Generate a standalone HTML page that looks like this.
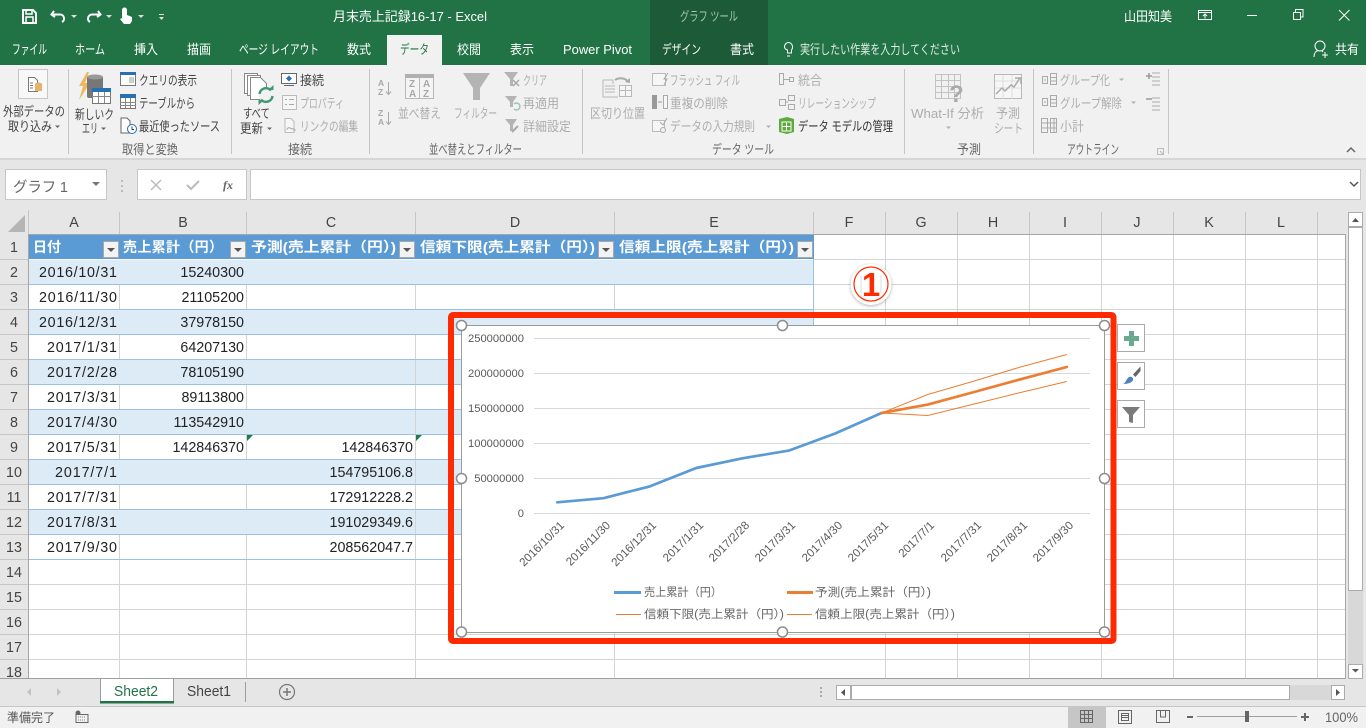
<!DOCTYPE html>
<html lang="ja"><head><meta charset="utf-8"><title>月末売上記録16-17 - Excel</title>
<style>
html,body{margin:0;padding:0;width:1366px;height:728px;overflow:hidden;background:#e6e6e6}
svg{display:block;font-family:"Liberation Sans","Noto Sans CJK JP",sans-serif}
.t{font-size:13px;fill:#fff}
.r{font-size:13px;fill:#444}
.d{font-size:13px;fill:#adadad}
.g{font-size:13px;fill:#666}
.c{font-size:14.3px;fill:#222}
.h{font-size:14.3px;fill:#444;text-anchor:middle}
.b{font-size:14px;font-weight:700;fill:#fff}
.y{font-size:11.2px;fill:#595959;text-anchor:end}
.x{font-size:11.6px;fill:#595959;text-anchor:end}
.l{font-size:11.5px;fill:#666}
</style></head><body>
<svg width="1366" height="728" viewBox="0 0 1366 728" xmlns="http://www.w3.org/2000/svg">
<rect width="1366" height="728" fill="#e6e6e6"/>
<!-- title bar -->
<rect width="1366" height="65" fill="#217346"/>
<rect x="650" width="118" height="65" fill="#1c5a38"/>
<rect x="387" y="35" width="55" height="30" fill="#f1f1f1"/>
<!-- QAT -->
<g fill="none" stroke="#fff" stroke-width="2">
<path d="M23 10h10l3 3v10H23z"/><path d="M26 10v4h6v-4M26 23v-6h7v6" stroke-width="1.500"/>
<path d="M54 11l-2.500 3.500 3.500 2.500M52 14.500h8a4 4 0 0 1 2 7.500"/>
<path d="M98 11l2.500 3.500-3.500 2.500M100 14.500h-8a4 4 0 0 0-4 4 4 4 0 0 0 2 3.500"/>
</g>
<path d="M122 10a2.500 2.500 0 0 1 5 0v5l5 2v4l-2 3h-6l-4-5 2-1z" fill="#fff"/>
<path d="M71 15h6l-3 3zM106 15h6l-3 3zM138 15h6l-3 3zM159 17h5l-2.500 3z" fill="#ddd"/><rect x="159" y="14" width="5" height="1" fill="#ddd"/>
<text class="t" x="333" y="21" textLength="154" lengthAdjust="spacingAndGlyphs">月末売上記録16-17  -  Excel</text>
<text class="t" x="680" y="21" textLength="58" lengthAdjust="spacingAndGlyphs" style="fill:#a5c6b2">グラフ ツール</text>
<text class="t" x="1124" y="21" textLength="48" lengthAdjust="spacingAndGlyphs">山田知美</text>
<g fill="none" stroke="#fff" stroke-width="1">
<rect x="1198.500" y="10.500" width="13" height="9"/><path d="M1198 12.500h14M1205 18.500v-4M1203 16l2-2 2 2"/>
<path d="M1247 15.500h10"/>
<path d="M1293.500 12.500h7v7h-7zM1295.500 12v-2.500h7.500v7.500h-2.500"/>
<path d="M1339 10l10.500 10.500M1349.500 10L1339 20.500"/>
</g>
<!-- tabs -->
<g class="t">
<text class="t" x="12" y="54" textLength="35" lengthAdjust="spacingAndGlyphs">ファイル</text>
<text class="t" x="75" y="54" textLength="30" lengthAdjust="spacingAndGlyphs">ホーム</text>
<text class="t" x="134" y="54" textLength="24" lengthAdjust="spacingAndGlyphs">挿入</text>
<text class="t" x="187" y="54" textLength="24" lengthAdjust="spacingAndGlyphs">描画</text>
<text class="t" x="239" y="54" textLength="80" lengthAdjust="spacingAndGlyphs">ページ レイアウト</text>
<text class="t" x="347" y="54" textLength="24" lengthAdjust="spacingAndGlyphs">数式</text>
<text class="t" x="400" y="54" textLength="29" lengthAdjust="spacingAndGlyphs" style="fill:#217346">データ</text>
<text class="t" x="457" y="54" textLength="24" lengthAdjust="spacingAndGlyphs">校閲</text>
<text class="t" x="510" y="54" textLength="24" lengthAdjust="spacingAndGlyphs">表示</text>
<text class="t" x="563" y="54" textLength="69" lengthAdjust="spacingAndGlyphs">Power Pivot</text>
<text class="t" x="662" y="54" textLength="39" lengthAdjust="spacingAndGlyphs">デザイン</text>
<text class="t" x="730" y="54" textLength="24" lengthAdjust="spacingAndGlyphs">書式</text>
<text class="t" x="800" y="54" textLength="160" lengthAdjust="spacingAndGlyphs" style="fill:#dfeae3">実行したい作業を入力してください</text>
<text class="t" x="1335" y="54" textLength="24" lengthAdjust="spacingAndGlyphs">共有</text>
</g>
<g fill="none" stroke="#fff" stroke-width="1">
<path d="M784.500 47a4 4.500 0 1 1 7 3v3h-4v-3a4 4 0 0 1-3-3zM787 56h3"/>
<circle cx="1320" cy="46" r="5"/><path d="M1314 57c0-4 2-6 4-6.500M1322 51l1 1M1322 55h6M1325 52v6"/>
</g>
<!-- ribbon -->
<rect y="65" width="1366" height="93" fill="#f1f1f1"/>
<rect y="158" width="1366" height="2" fill="#d6d6d6"/>
<g fill="#c6c6c6"><rect x="68" y="69" width="1" height="85"/><rect x="231" y="69" width="1" height="85"/><rect x="369" y="69" width="1" height="85"/><rect x="582" y="69" width="1" height="85"/><rect x="904" y="69" width="1" height="85"/><rect x="1033" y="69" width="1" height="85"/><rect x="1168" y="69" width="1" height="85"/></g>
<!-- external data -->
<rect x="18.500" y="69.500" width="29" height="29" fill="#f8f8f8" stroke="#c6c6c6"/>
<path d="M28.500 77.500h6l3 3v11h-9z" fill="#fff" stroke="#777"/><path d="M30 83h3M30 85.500h3M30 88h3" stroke="#777"/>
<ellipse cx="38.500" cy="84" rx="3.500" ry="1.500" fill="#e3b36a"/><rect x="35" y="84" width="7" height="7" fill="#e3b36a"/>
<text class="r" x="3" y="116" textLength="62" lengthAdjust="spacingAndGlyphs">外部データの</text>
<text class="r" x="8" y="131" textLength="44" lengthAdjust="spacingAndGlyphs">取り込み</text>
<path d="M55 125.500h5l-2.500 2.500z" fill="#666"/>
<!-- new query -->
<path d="M87 72l-8 14h4l-4 14 11-17h-5l4-11z" fill="#edb95e"/>
<rect x="87" y="76" width="16" height="22" rx="2" fill="#777"/><ellipse cx="95" cy="77" rx="8" ry="2.500" fill="#999"/>
<rect x="92.500" y="88.500" width="18" height="15" fill="#fff" stroke="#777"/><rect x="92" y="88" width="19" height="4" fill="#2a6fb1"/><path d="M92 96.500h19M98.500 92v11M104.500 92v11" stroke="#888"/>
<text class="r" x="75" y="119" textLength="39" lengthAdjust="spacingAndGlyphs">新しいク</text>
<text class="r" x="82" y="133" textLength="16" lengthAdjust="spacingAndGlyphs">エリ</text>
<path d="M101 127.500h5l-2.500 2.500z" fill="#666"/>
<rect x="120.500" y="72.500" width="15" height="13" fill="#fff" stroke="#777"/><rect x="120" y="72" width="16" height="3" fill="#2a6fb1"/><path d="M129 78h5M129 80h5M129 82h5" stroke="#999" fill="none"/>
<text class="r" x="139" y="85" textLength="58" lengthAdjust="spacingAndGlyphs">クエリの表示</text>
<rect x="120.500" y="94.500" width="15" height="14" fill="#fff" stroke="#777"/><rect x="120" y="94" width="16" height="4" fill="#2a6fb1"/><path d="M120 102.500h16M120 105.500h16M125.500 98v10M130.500 98v10" stroke="#888"/>
<text class="r" x="139" y="108" textLength="56" lengthAdjust="spacingAndGlyphs">テーブルから</text>
<path d="M121 118h6l3 3v12h-9z" fill="#fff" stroke="#666"/><circle cx="132" cy="129" r="4.500" fill="#fff" stroke="#2a6fb1"/><path d="M132 126.500v3h2" stroke="#444" fill="none"/>
<text class="r" x="139" y="131" textLength="81" lengthAdjust="spacingAndGlyphs">最近使ったソース</text>
<text class="g" x="122" y="154" textLength="56" lengthAdjust="spacingAndGlyphs">取得と変換</text>
<!-- refresh all -->
<g fill="#fff" stroke="#888"><rect x="244.500" y="73.500" width="13" height="20"/><rect x="247.500" y="75.500" width="13" height="20"/><path d="M250.500 77.500h10l6 6v16h-16z"/></g>
<circle cx="266" cy="95" r="7.500" fill="#f1f1f1"/><path d="M259.500 94a6.500 6.500 0 0 1 11.500-3.500M272.500 96a6.500 6.500 0 0 1-11.500 3.500" fill="none" stroke="#3f9a74" stroke-width="2.500"/><path d="M268 90h5.500v-5zM264 100h-5.500v5z" fill="#3f9a74"/>
<text class="r" x="243" y="118" textLength="27" lengthAdjust="spacingAndGlyphs">すべて</text>
<text class="r" x="240" y="133" textLength="23" lengthAdjust="spacingAndGlyphs">更新</text>
<path d="M267 127.500h5l-2.500 2.500z" fill="#666"/>
<rect x="281.500" y="73.500" width="15" height="10" fill="#fff" stroke="#666"/><path d="M289 75.500l3 3-3 3-3-3z" fill="#2a6fb1"/><path d="M284 85.500h10" stroke="#666"/>
<text class="r" x="300" y="85" textLength="24" lengthAdjust="spacingAndGlyphs">接続</text>
<rect x="282.500" y="95.500" width="14" height="14" fill="#f6f6f6" stroke="#bbb"/><path d="M285 99.500h2M289 99.500h5M285 104.500h2M289 104.500h5" stroke="#aaa"/>
<text class="d" x="300" y="108" textLength="44" lengthAdjust="spacingAndGlyphs">プロパティ</text>
<path d="M285 118.500h6l3 3v11h-9z" fill="#f6f6f6" stroke="#bbb"/><path d="M287 130a2 2 0 0 1 3-2l2 1a2 2 0 0 1 3 2" fill="none" stroke="#aaa"/>
<text class="d" x="300" y="131" textLength="58" lengthAdjust="spacingAndGlyphs">リンクの編集</text>
<text class="g" x="288" y="154" textLength="24" lengthAdjust="spacingAndGlyphs">接続</text>
<!-- sort -->
<g font-size="8.500" fill="#a8a8a8" font-weight="700"><text x="378" y="86">A</text><text x="378" y="95">Z</text><text x="378" y="116">Z</text><text x="378" y="125">A</text></g>
<path d="M388.500 82v12M386 91.500l2.500 3 2.500-3M388.500 112v12M386 121.500l2.500 3 2.500-3" fill="none" stroke="#a8a8a8"/>
<rect x="405.500" y="74.500" width="28" height="24" fill="#f4f4f4" stroke="#b8b8b8"/><rect x="405" y="74" width="29" height="4" fill="#b0b0b0"/><path d="M419.500 78v20" stroke="#b8b8b8"/>
<g font-size="10" fill="#a8a8a8" font-weight="700"><text x="409" y="87">Z</text><text x="423" y="87">A</text><text x="409" y="97">A</text><text x="423" y="97">Z</text></g>
<text class="d" x="398" y="118" textLength="43" lengthAdjust="spacingAndGlyphs">並べ替え</text>
<path d="M463 73h27l-10 15v12h-7V88z" fill="#b4b4b4"/>
<text class="d" x="454" y="118" textLength="43" lengthAdjust="spacingAndGlyphs">フィルター</text>
<path d="M504 72h14l-5 7v7h-3v-7z" fill="#b4b4b4"/><path d="M513 80l6 6M519 80l-6 6" stroke="#a8a8a8" stroke-width="1.500"/>
<text class="d" x="523" y="85" textLength="24" lengthAdjust="spacingAndGlyphs">クリア</text>
<path d="M505 96h12l-4 6v5h-3v-5z" fill="#b4b4b4"/><path d="M514 104a3.500 3.500 0 1 1 0 5" fill="none" stroke="#9cc5b2" stroke-width="1.500"/>
<text class="d" x="523" y="108" textLength="36" lengthAdjust="spacingAndGlyphs">再適用</text>
<path d="M505 119h12l-4 6v6h-3v-6z" fill="#b4b4b4"/><path d="M512 132l6-6" stroke="#a8a8a8" stroke-width="2"/>
<text class="d" x="523" y="131" textLength="48" lengthAdjust="spacingAndGlyphs">詳細設定</text>
<text class="g" x="429" y="154" textLength="93" lengthAdjust="spacingAndGlyphs">並べ替えとフィルター</text>
<!-- data tools -->
<path d="M603 80h10v4M603 80v17h15" fill="none" stroke="#b8b8b8"/><path d="M605 86h10M605 89h10M605 92h10" stroke="#b8b8b8"/>
<path d="M615 80a8 6 0 0 1 13 2" fill="none" stroke="#aaa" stroke-width="2"/><path d="M625 82l5 1 0-5z" fill="#aaa"/>
<rect x="619.500" y="85.500" width="12" height="11" fill="#f6f6f6" stroke="#b8b8b8"/><path d="M619 90.500h13M625.500 86v10" stroke="#b8b8b8"/>
<text class="d" x="590" y="118" textLength="55" lengthAdjust="spacingAndGlyphs">区切り位置</text>
<rect x="652.500" y="73.500" width="13" height="12" fill="#f6f6f6" stroke="#bbb"/><path d="M668 73l-4 6h3l-3 6" fill="none" stroke="#aaa"/>
<text class="d" x="670" y="85" textLength="70" lengthAdjust="spacingAndGlyphs">フラッシュ フィル</text>
<rect x="652" y="95" width="5" height="14" fill="#999"/><rect x="663.500" y="95.500" width="4" height="13" fill="#f6f6f6" stroke="#aaa"/><path d="M658 102h4" stroke="#999"/>
<text class="d" x="670" y="108" textLength="58" lengthAdjust="spacingAndGlyphs">重複の削除</text>
<rect x="652.500" y="120.500" width="12" height="11" fill="#f6f6f6" stroke="#bbb"/><path d="M660 122l3 3 4-7" fill="none" stroke="#aaa"/><circle cx="663" cy="130" r="2.500" fill="#f1f1f1" stroke="#aaa"/>
<text class="d" x="670" y="131" textLength="85" lengthAdjust="spacingAndGlyphs">データの入力規則</text>
<path d="M766 125.500h5l-2.500 2.500z" fill="#b0b0b0"/>
<path d="M779.500 73.500h4v11h-4zM789.500 77.500h4v4h-4zM784 79.500h5" fill="none" stroke="#aaa"/>
<text class="d" x="798" y="85" textLength="24" lengthAdjust="spacingAndGlyphs">統合</text>
<path d="M779.500 99.500h6v6h-6zM788.500 95.500h6v5h-6zM788.500 104.500h6v5h-6zM785 102h3" fill="none" stroke="#aaa"/>
<text class="d" x="798" y="108" textLength="78" lengthAdjust="spacingAndGlyphs">リレーションシップ</text>
<path d="M779 119l8-2 7 2v13l-7 2-8-2z" fill="#5eaa3c"/><path d="M782 122h9v9h-9zM786.500 122v9M782 126.500h9" stroke="#fff" fill="none"/>
<text class="r" x="798" y="131" textLength="95" lengthAdjust="spacingAndGlyphs" style="fill:#333">データ モデルの管理</text>
<text class="g" x="712" y="154" textLength="62" lengthAdjust="spacingAndGlyphs">データ ツール</text>
<!-- forecast -->
<g fill="none" stroke="#c2c2c2"><rect x="935.500" y="74.500" width="25" height="24"/><path d="M935 80.500h25M935 86.500h25M935 92.500h25M941.500 74v25M948.500 74v25M954.500 74v25"/></g>
<text x="949" y="102" font-size="24" font-weight="700" fill="#aaa" font-family="Liberation Sans">?</text>
<text class="d" x="911" y="118" textLength="73" lengthAdjust="spacingAndGlyphs">What-If 分析</text>
<path d="M946 126.500h5l-2.500 2.500z" fill="#b0b0b0"/>
<g fill="#f6f6f6" stroke="#b8b8b8"><rect x="994.500" y="74.500" width="27" height="24"/></g>
<path d="M995 81h26M995 88h26M1003 75v24M1012 75v24" stroke="#ddd"/>
<path d="M996 94l6-6 3 3 6-6 3 2 6-9M1015 78h6v6" fill="none" stroke="#aaa" stroke-width="1.500"/>
<text class="d" x="996" y="118" textLength="24" lengthAdjust="spacingAndGlyphs">予測</text>
<text class="d" x="994" y="133" textLength="29" lengthAdjust="spacingAndGlyphs">シート</text>
<text class="g" x="957" y="154" textLength="24" lengthAdjust="spacingAndGlyphs">予測</text>
<!-- outline -->
<g fill="none" stroke="#aaa">
<path d="M1042.500 76.500h5v7h-5zM1050.500 73.500h6v11h-6zM1050 77.500h7M1050 81h7M1044 80h2"/>
<path d="M1042.500 98.500h5v7h-5zM1050.500 95.500h6v11h-6zM1050 99.500h7M1050 103h7M1044 102h2"/>
<path d="M1041.500 118.500h6v14h-6zM1050.500 118.500h6v14h-6zM1041 123h16M1041 128h16M1054 118v15"/>
<path d="M1152 73h8M1152 77h8M1152 81h8M1152 85h8M1152 98h8M1152 102h8M1152 106h8M1152 110h8"/>
</g>
<path d="M1146 76h6M1149 73v6M1146 99h6" stroke="#999" stroke-width="1.500"/>
<text class="d" x="1060" y="85" textLength="50" lengthAdjust="spacingAndGlyphs">グループ化</text>
<path d="M1119 78.500h5l-2.500 2.500z" fill="#b0b0b0"/>
<text class="d" x="1060" y="108" textLength="62" lengthAdjust="spacingAndGlyphs">グループ解除</text>
<path d="M1131 101.500h5l-2.500 2.500z" fill="#b0b0b0"/>
<text class="d" x="1060" y="131" textLength="24" lengthAdjust="spacingAndGlyphs">小計</text>
<text class="g" x="1067" y="154" textLength="52" lengthAdjust="spacingAndGlyphs">アウトライン</text>
<path d="M1157.500 148.500h6v6h-6zM1160 151l3 3" fill="none" stroke="#bbb"/>
<path d="M1347 152l4-4 4 4" fill="none" stroke="#666" stroke-width="1.500"/>
<!-- formula bar -->
<rect x="5.500" y="169.500" width="101" height="30" fill="#fff" stroke="#c6c6c6"/>
<text x="13" y="192" font-size="14.500" fill="#666" textLength="55">グラフ 1</text>
<path d="M92 182h8l-4 4z" fill="#777"/>
<g fill="#bbb"><rect x="121" y="180" width="2" height="2"/><rect x="121" y="185" width="2" height="2"/><rect x="121" y="190" width="2" height="2"/></g>
<rect x="137.500" y="169.500" width="109" height="30" fill="#fff" stroke="#c6c6c6"/>
<path d="M151 180l10 10M161 180l-10 10" stroke="#bbb" stroke-width="1.500"/>
<path d="M187 185l4 4 8-8" fill="none" stroke="#bbb" stroke-width="2"/>
<text x="223" y="189" font-size="12" font-style="italic" font-weight="700" fill="#666" font-family="Liberation Serif">fx</text>
<rect x="250.500" y="169.500" width="1110" height="30" fill="#fff" stroke="#c6c6c6"/>
<path d="M1350 182l4 4 4-4" fill="none" stroke="#555" stroke-width="1.500"/>
<!-- sheet bg -->
<rect x="29" y="235" width="1317" height="443" fill="#fff"/>
<rect y="210" width="1346" height="25" fill="#e6e6e6"/>
<rect y="235" width="29" height="443" fill="#e6e6e6"/>
<path d="M8 232L25 215v17z" fill="#b5b5b5"/>
<!-- table bands -->
<g fill="#ddebf7"><rect x="29" y="260" width="785" height="24"/><rect x="29" y="310" width="785" height="24"/><rect x="29" y="360" width="785" height="24"/><rect x="29" y="410" width="785" height="24"/><rect x="29" y="460" width="785" height="24"/><rect x="29" y="510" width="785" height="24"/></g>
<!-- grid -->
<g stroke="#d4d4d4">
<path d="M119.500 284v25M246.500 284v25M415.500 284v25M614.500 284v25M119.500 334v25M246.500 334v25M119.500 384v25M246.500 384v25M119.500 434v25M246.500 434v25M119.500 484v25M246.500 484v25M119.500 534v25M246.500 534v25M119.500 559v119M246.500 559v119M415.500 334v344M614.500 334v344"/>
<path d="M885.500 235v443M957.500 235v443M1029.500 235v443M1101.500 235v443M1173.500 235v443M1245.500 235v443M1317.500 235v443"/>
<path d="M814 259.500h532M814 284.500h532M814 309.500h532M814 334.500h532M814 359.500h532M814 384.500h532M814 409.500h532M814 434.500h532M814 459.500h532M814 484.500h532M814 509.500h532M814 534.500h532M814 559.500h532M29 584.500h1317M29 609.500h1317M29 634.500h1317M29 659.500h1317"/>
</g>
<g stroke="#9bc2e6"><path d="M29 284.500h785M29 309.500h785M29 334.500h785M29 359.500h785M29 384.500h785M29 409.500h785M29 434.500h785M29 459.500h785M29 484.500h785M29 509.500h785M29 534.500h785M29 559.500h785M813.500 235v325"/></g>
<!-- headers -->
<g stroke="#c6c6c6"><path d="M119.500 212v22M246.500 212v22M415.500 212v22M614.500 212v22M813.500 212v22M885.500 212v22M957.500 212v22M1029.500 212v22M1101.500 212v22M1173.500 212v22M1245.500 212v22M1317.500 212v22M28.500 210v24"/>
<path d="M0 259.500h28M0 284.500h28M0 309.500h28M0 334.500h28M0 359.500h28M0 384.500h28M0 409.500h28M0 434.500h28M0 459.500h28M0 484.500h28M0 509.500h28M0 534.500h28M0 559.500h28M0 584.500h28M0 609.500h28M0 634.500h28M0 659.500h28"/></g>
<path d="M28.500 234v444M28 234.500h1318" stroke="#a6a6a6"/>
<text class="h" x="74" y="227">A</text><text class="h" x="183" y="227">B</text><text class="h" x="331" y="227">C</text><text class="h" x="515" y="227">D</text><text class="h" x="714" y="227">E</text><text class="h" x="849" y="227">F</text><text class="h" x="921" y="227">G</text><text class="h" x="993" y="227">H</text><text class="h" x="1065" y="227">I</text><text class="h" x="1137" y="227">J</text><text class="h" x="1209" y="227">K</text><text class="h" x="1281" y="227">L</text>
<text class="h" x="14" y="252">1</text><text class="h" x="14" y="277">2</text><text class="h" x="14" y="302">3</text><text class="h" x="14" y="327">4</text><text class="h" x="14" y="352">5</text><text class="h" x="14" y="377">6</text><text class="h" x="14" y="402">7</text><text class="h" x="14" y="427">8</text><text class="h" x="14" y="452">9</text><text class="h" x="14" y="477">10</text><text class="h" x="14" y="502">11</text><text class="h" x="14" y="527">12</text><text class="h" x="14" y="552">13</text><text class="h" x="14" y="577">14</text><text class="h" x="14" y="602">15</text><text class="h" x="14" y="627">16</text><text class="h" x="14" y="652">17</text><text class="h" x="14" y="677">18</text>
<!-- table header -->
<rect x="29" y="235" width="785" height="24" fill="#5b9bd5"/>
<text class="b" x="33" y="252" textLength="28">日付</text>
<text class="b" x="123" y="252" textLength="100">売上累計（円）</text>
<text class="b" x="251" y="252" textLength="145" lengthAdjust="spacingAndGlyphs">予測(売上累計（円）)</text>
<text class="b" x="420" y="252" textLength="175" lengthAdjust="spacingAndGlyphs">信頼下限(売上累計（円）)</text>
<text class="b" x="619" y="252" textLength="175" lengthAdjust="spacingAndGlyphs">信頼上限(売上累計（円）)</text>
<g fill="#f3f3f3" stroke="#a8a8a8"><rect x="103.500" y="241.500" width="15" height="16"/><rect x="230.500" y="241.500" width="15" height="16"/><rect x="399.500" y="241.500" width="15" height="16"/><rect x="598.500" y="241.500" width="15" height="16"/><rect x="797.500" y="241.500" width="15" height="16"/></g>
<g fill="#555"><path d="M107 248h8l-4 4zM234 248h8l-4 4zM403 248h8l-4 4zM602 248h8l-4 4zM801 248h8l-4 4z"/></g>
<!-- dates -->
<g class="c">
<text class="c" x="39" y="277" textLength="78">2016/10/31</text>
<text class="c" x="39" y="302" textLength="78">2016/11/30</text>
<text class="c" x="39" y="327" textLength="78">2016/12/31</text>
<text class="c" x="47" y="352" textLength="70">2017/1/31</text>
<text class="c" x="47" y="377" textLength="70">2017/2/28</text>
<text class="c" x="47" y="402" textLength="70">2017/3/31</text>
<text class="c" x="47" y="427" textLength="70">2017/4/30</text>
<text class="c" x="47" y="452" textLength="70">2017/5/31</text>
<text class="c" x="55" y="477" textLength="62">2017/7/1</text>
<text class="c" x="47" y="502" textLength="70">2017/7/31</text>
<text class="c" x="47" y="527" textLength="70">2017/8/31</text>
<text class="c" x="47" y="552" textLength="70">2017/9/30</text>
</g>
<g class="c" text-anchor="end">
<text class="c" x="244" y="277">15240300</text><text class="c" x="244" y="302">21105200</text><text class="c" x="244" y="327">37978150</text><text class="c" x="244" y="352">64207130</text><text class="c" x="244" y="377">78105190</text><text class="c" x="244" y="402">89113800</text><text class="c" x="244" y="427">113542910</text><text class="c" x="244" y="452">142846370</text>
<text class="c" x="413" y="452">142846370</text><text class="c" x="413" y="477">154795106.8</text><text class="c" x="413" y="502">172912228.2</text><text class="c" x="413" y="527">191029349.6</text><text class="c" x="413" y="552">208562047.7</text>
</g>
<path d="M247 435h6l-6 6zM416 435h6l-6 6z" fill="#1f7a45"/>
<!-- callout -->
<circle cx="871" cy="284.500" r="20.500" fill="#fff" style="filter:drop-shadow(0 1.500px 1.500px rgba(0,0,0,.3))"/>
<circle cx="871" cy="284" r="17" fill="#fff" stroke="#ff2a00" stroke-width="1.200"/>
<path d="M861 275v18M881 275v18" stroke="#ddd" stroke-width="1"/>
<text x="871" y="296" font-size="33" font-weight="700" fill="#ff2a00" text-anchor="middle">1</text>
<!-- red frame -->
<rect x="451" y="315" width="662.500" height="326" rx="2" fill="none" stroke="#ff2a00" stroke-width="6"/>
<!-- chart -->
<rect x="461.500" y="325.500" width="643" height="307" fill="#fff" stroke="#9b9b9b"/>
<g stroke="#d9d9d9"><path d="M534 338.500h556M534 373.500h556M534 408.500h556M534 443.500h556M534 478.500h556M534 513.500h556"/></g>
<text class="y" x="524" y="342">250000000</text><text class="y" x="524" y="377">200000000</text><text class="y" x="524" y="412">150000000</text><text class="y" x="524" y="447">100000000</text><text class="y" x="524" y="482">50000000</text><text class="y" x="524" y="517">0</text>
<polyline points="557.200,502.300 603.500,498.200 649.800,486.400 696.200,468 742.500,458.300 788.800,450.600 835.200,433.500 881.500,413" fill="none" stroke="#5b9bd5" stroke-width="2.700" stroke-linejoin="round" stroke-linecap="round"/>
<polyline points="881.500,413 927.800,394.500 974.200,381 1020.500,367 1066.800,354.500" fill="none" stroke="#ed7d31" stroke-width="1"/>
<polyline points="881.500,413 927.800,415.500 974.200,404 1020.500,392.500 1066.800,381.500" fill="none" stroke="#ed7d31" stroke-width="1"/>
<polyline points="881.500,413 927.800,404.600 974.200,392 1020.500,379.300 1066.800,367" fill="none" stroke="#ed7d31" stroke-width="2.700" stroke-linejoin="round" stroke-linecap="round"/>
<g>
<text class="x" transform="translate(565,526) rotate(-45)">2016/10/31</text>
<text class="x" transform="translate(611,526) rotate(-45)">2016/11/30</text>
<text class="x" transform="translate(657,526) rotate(-45)">2016/12/31</text>
<text class="x" transform="translate(704,526) rotate(-45)">2017/1/31</text>
<text class="x" transform="translate(750,526) rotate(-45)">2017/2/28</text>
<text class="x" transform="translate(796,526) rotate(-45)">2017/3/31</text>
<text class="x" transform="translate(843,526) rotate(-45)">2017/4/30</text>
<text class="x" transform="translate(889,526) rotate(-45)">2017/5/31</text>
<text class="x" transform="translate(935,526) rotate(-45)">2017/7/1</text>
<text class="x" transform="translate(982,526) rotate(-45)">2017/7/31</text>
<text class="x" transform="translate(1028,526) rotate(-45)">2017/8/31</text>
<text class="x" transform="translate(1074,526) rotate(-45)">2017/9/30</text>
</g>
<path d="M614 592.500h27" stroke="#5b9bd5" stroke-width="3"/><path d="M787 592.500h26" stroke="#ed7d31" stroke-width="3"/>
<path d="M616 614.500h25M787 614.500h25" stroke="#ed7d31"/>
<text class="l" x="644" y="596" textLength="78" lengthAdjust="spacingAndGlyphs">売上累計（円）</text>
<text class="l" x="815" y="596" textLength="116" lengthAdjust="spacingAndGlyphs">予測(売上累計（円）)</text>
<text class="l" x="644" y="618" textLength="140" lengthAdjust="spacingAndGlyphs">信頼下限(売上累計（円）)</text>
<text class="l" x="815" y="618" textLength="140" lengthAdjust="spacingAndGlyphs">信頼上限(売上累計（円）)</text>
<g fill="#fff" stroke="#8c8c8c" stroke-width="1.500"><circle cx="461.500" cy="325.500" r="5"/><circle cx="782.500" cy="325.500" r="5"/><circle cx="1104.500" cy="325.500" r="5"/><circle cx="461.500" cy="478.500" r="5"/><circle cx="1104.500" cy="478.500" r="5"/><circle cx="461.500" cy="632" r="5"/><circle cx="782.500" cy="632" r="5"/><circle cx="1104.500" cy="632" r="5"/></g>
<!-- side buttons -->
<g fill="#fff" stroke="#aaa"><rect x="1117.500" y="324.500" width="27" height="27"/><rect x="1117.500" y="362.500" width="27" height="27"/><rect x="1117.500" y="400.500" width="27" height="27"/></g>
<path d="M1129 331h5v5h5v5h-5v5h-5v-5h-5v-5h5z" fill="#6aa98f"/>
<path d="M1140.500 366.500l-7.500 8 2.500 2.500 5-6z" fill="#666"/><path d="M1123 384c3-1 3-5 6-7 2-1 5 1 4 3-1 3-6 4-10 4z" fill="#4f81bd"/>
<path d="M1122 407h18l-7 8v8l-4-1v-7z" fill="#7a7a7a"/>
<!-- bottom -->
<rect y="678" width="1346" height="1" fill="#9e9e9e"/>
<rect x="1345" y="234" width="1" height="445" fill="#a6a6a6"/>
<rect y="679" width="1366" height="27" fill="#e6e6e6"/>
<rect x="100.500" y="678.500" width="73" height="24" fill="#fff" stroke="#9e9e9e"/>
<rect x="100" y="701" width="74" height="2.500" fill="#217346"/>
<text x="114" y="696" font-size="14.500" fill="#217346" textLength="44" lengthAdjust="spacingAndGlyphs">Sheet2</text>
<text x="187" y="696" font-size="14.500" fill="#444" textLength="44" lengthAdjust="spacingAndGlyphs">Sheet1</text>
<rect x="245" y="682" width="1" height="20" fill="#9e9e9e"/>
<circle cx="287" cy="692" r="7.500" fill="none" stroke="#777" stroke-width="1.200"/><path d="M283 692h8M287 688v8" stroke="#777" stroke-width="1.500"/>
<path d="M31 688l-4 4 4 4zM57 688l4 4-4 4z" fill="#c2c2c2"/>
<g fill="#aaa"><rect x="820" y="687" width="2" height="2"/><rect x="820" y="691" width="2" height="2"/><rect x="820" y="695" width="2" height="2"/></g>
<!-- h scroll -->
<rect x="836.500" y="685.500" width="14" height="14" fill="#fff" stroke="#ababab"/><path d="M845 689l-4 3.500 4 3.500z" fill="#555"/>
<rect x="851" y="685" width="480" height="15" fill="#d8d8d8"/>
<rect x="851.500" y="685.500" width="438" height="14" fill="#fff" stroke="#ababab"/>
<rect x="1331.500" y="685.500" width="13" height="14" fill="#fff" stroke="#ababab"/><path d="M1336 689l4 3.500-4 3.500z" fill="#555"/>
<!-- v scroll -->
<rect x="1346" y="210" width="20" height="470" fill="#e6e6e6"/>
<rect x="1348.500" y="212.500" width="14" height="14" fill="#fff" stroke="#ababab"/><path d="M1352 222l3.500-4 3.500 4z" fill="#555"/>
<rect x="1348" y="227" width="15" height="437" fill="#d8d8d8"/>
<rect x="1348.500" y="227.500" width="14" height="363" fill="#fff" stroke="#ababab"/>
<rect x="1348.500" y="664.500" width="14" height="14" fill="#fff" stroke="#ababab"/><path d="M1352 669h7l-3.500 3.500z" fill="#555"/>
<!-- status -->
<rect y="706" width="1366" height="22" fill="#f1f1f1"/><rect y="706" width="1366" height="1" fill="#c6c6c6"/>
<text x="7" y="722" font-size="12.500" fill="#555" textLength="48" lengthAdjust="spacingAndGlyphs">準備完了</text>
<circle cx="78" cy="713" r="2.500" fill="#666"/><path d="M76 714.500h12v8H76z" fill="#f1f1f1" stroke="#666"/><path d="M78 717h8M78 720h8" stroke="#888" stroke-dasharray="1 1"/>
<rect x="1068" y="707" width="38" height="21" fill="#c6c6c6"/>
<g fill="none" stroke="#666"><path d="M1080.500 710.500h12v12h-12zM1084.500 710v13M1088.500 710v13M1080 714.500h13M1080 718.500h13"/>
<path d="M1118.500 710.500h13v13h-13zM1121.500 713.500h7v7h-7zM1122 715.500h6M1122 717.500h6"/>
<path d="M1156.500 710.500h13v12h-13zM1160.500 710v7h5v-7"/></g>
<path d="M1197 716.500h100" stroke="#a0a0a0"/>
<rect x="1245" y="711" width="4" height="11" fill="#666"/>
<path d="M1187 717h6" stroke="#666" stroke-width="2"/><path d="M1301 717h8M1305 713v8" stroke="#666" stroke-width="2"/>
<text x="1325" y="722" font-size="14" fill="#666" textLength="33" lengthAdjust="spacingAndGlyphs">100%</text>
</svg>
</body></html>
